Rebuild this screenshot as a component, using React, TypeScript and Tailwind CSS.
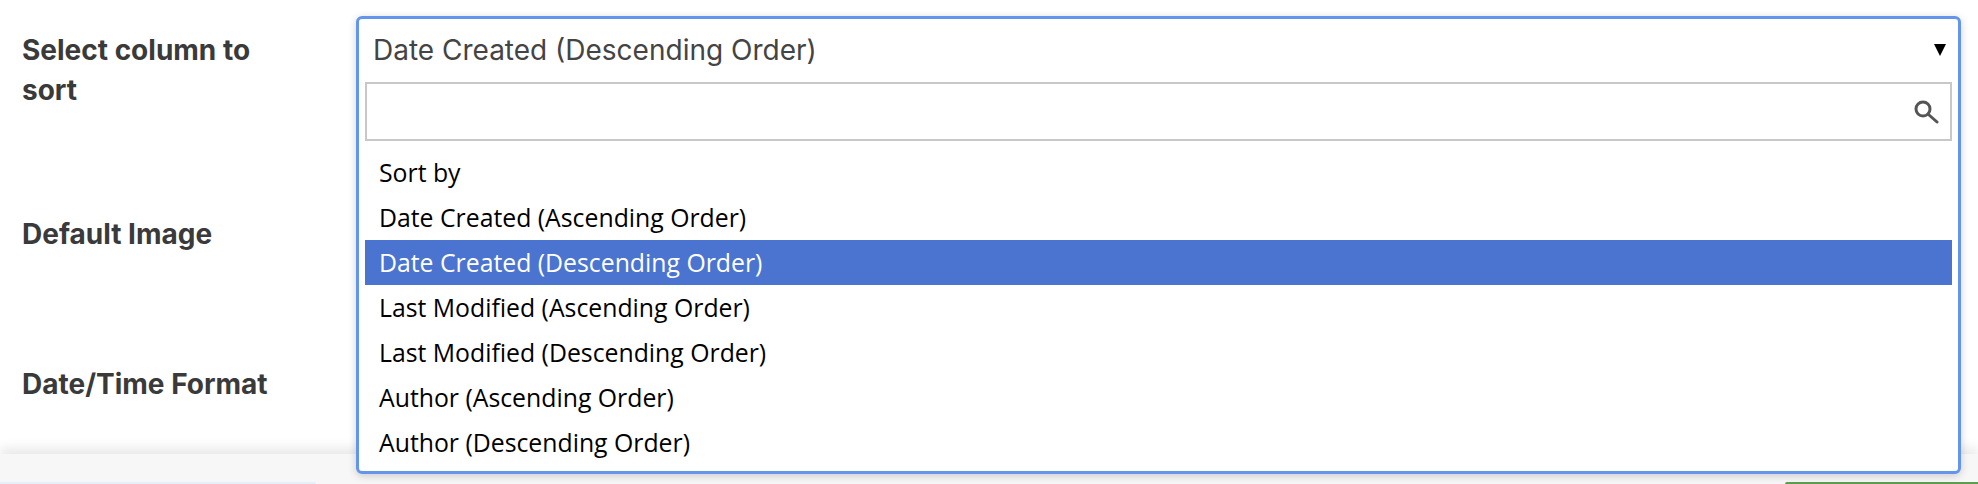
import React from 'react';

const OPTIONS = [
  'Sort by',
  'Date Created (Ascending Order)',
  'Date Created (Descending Order)',
  'Last Modified (Ascending Order)',
  'Last Modified (Descending Order)',
  'Author (Ascending Order)',
  'Author (Descending Order)',
];

const SELECTED = 'Date Created (Descending Order)';

export default function App() {
  return (
    <div className="relative h-[484px] w-[1978px] overflow-hidden bg-white font-['Inter',sans-serif]">
      <div className="flex h-[454px] flex-col pl-[22px] pt-[30px] text-[28px] font-bold leading-[40px] text-[#3a3a3a]">
        <div className="w-[260px]">Select column to sort</div>
        <div className="mt-[104px]">Default Image</div>
        <div className="mt-[110px]">Date/Time Format</div>
      </div>

      {/* Footer */}
      <div className="relative h-[30px] bg-[#f7f7f7] shadow-[0_-6px_12px_rgba(0,0,0,0.09)]">
        <div className="absolute bottom-0 left-0 h-[2px] w-[316px] rounded-tr-sm bg-[#e3f0fb]" />
        <div className="absolute bottom-0 left-[1785px] h-[2px] w-[193px] rounded-tl-sm bg-[#5c9e4e]" />
      </div>

      {/* Open select */}
      <div className="absolute left-[356px] top-[16px] flex h-[458px] w-[1605px] flex-col rounded-[6px] border-[3px] border-[#6495ed] bg-white shadow-[0_2px_8px_rgba(0,0,0,0.18)] font-['Open_Sans',sans-serif]">
        <div className="flex h-[63px] shrink-0 items-center justify-between pb-[2px] pl-[14px] pr-[8px] font-['Inter',sans-serif] text-[28px] text-[#444444]">
          <span>{SELECTED}</span>
          <svg width="14" height="12" viewBox="0 0 14 12" className="mr-[3px]">
            <polygon points="1,0 13,0 7,12" fill="#000" />
          </svg>
        </div>
        <div className="mx-[6px] flex h-[59px] shrink-0 items-center justify-end border-2 border-[#c8c8c8] pr-[11px]">
          <svg width="26" height="26" viewBox="0 0 26 26" fill="none" stroke="#555555" strokeWidth="3" strokeLinecap="round">
            <circle cx="10" cy="10" r="7" />
            <path d="M15.5 15.5 L24 23" />
          </svg>
        </div>
        <ul className="mx-[6px] mt-[9px] flex flex-col text-[24.8px] text-black">
          {OPTIONS.map(option => (
            <li
              key={option}
              className={option === SELECTED ? 'flex h-[45px] items-center bg-[#4a74d0] pl-[14px] text-white' : 'flex h-[45px] items-center pl-[14px]'}
            >
              {option}
            </li>
          ))}
        </ul>
      </div>
    </div>
  );
}
